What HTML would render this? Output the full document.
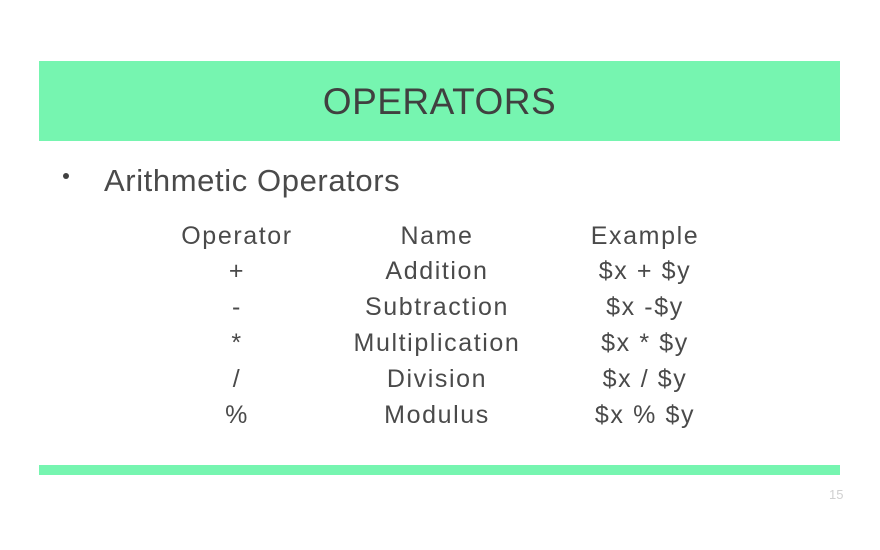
<!DOCTYPE html>
<html><head><style>
body{margin:0;width:880px;height:550px;background:#fff;position:relative;overflow:hidden;font-family:"Liberation Sans",sans-serif;color:#4a4a4a}
.banner{position:absolute;left:39px;top:61px;width:801px;height:80px;background:#76f5b0}
.title{position:absolute;left:39px;width:801px;top:80px;text-align:center;font-size:37px;line-height:44px;letter-spacing:0.5px;color:#404040}
.bul{position:absolute;left:63px;top:173px;width:6px;height:6px;border-radius:50%;background:#404040}
.h{position:absolute;left:104px;top:162px;font-size:31px;line-height:38px;letter-spacing:0.6px}
.c{position:absolute;width:240px;text-align:center;font-size:25px;line-height:28px;letter-spacing:1.6px}
.bar{position:absolute;left:39px;top:465px;width:801px;height:10px;background:#76f5b0}
.pn{position:absolute;left:829px;top:487px;font-size:13px;color:#d0d0d0}
</style></head><body>
<div class="banner"></div>
<div class="title">OPERATORS</div>
<div class="bul"></div>
<div class="h">Arithmetic Operators</div>
<div class="c" style="left:117px;top:222px">Operator</div>
<div class="c" style="left:317px;top:222px">Name</div>
<div class="c" style="left:525px;top:222px">Example</div>
<div class="c" style="left:117px;top:257px">+</div>
<div class="c" style="left:317px;top:257px">Addition</div>
<div class="c" style="left:525px;top:257px">$x + $y</div>
<div class="c" style="left:117px;top:293px">-</div>
<div class="c" style="left:317px;top:293px">Subtraction</div>
<div class="c" style="left:525px;top:293px">$x -$y</div>
<div class="c" style="left:117px;top:329px">*</div>
<div class="c" style="left:317px;top:329px">Multiplication</div>
<div class="c" style="left:525px;top:329px">$x * $y</div>
<div class="c" style="left:117px;top:365px">/</div>
<div class="c" style="left:317px;top:365px">Division</div>
<div class="c" style="left:525px;top:365px">$x / $y</div>
<div class="c" style="left:117px;top:401px">%</div>
<div class="c" style="left:317px;top:401px">Modulus</div>
<div class="c" style="left:525px;top:401px">$x % $y</div>
<div class="bar"></div>
<div class="pn">15</div>
</body></html>
